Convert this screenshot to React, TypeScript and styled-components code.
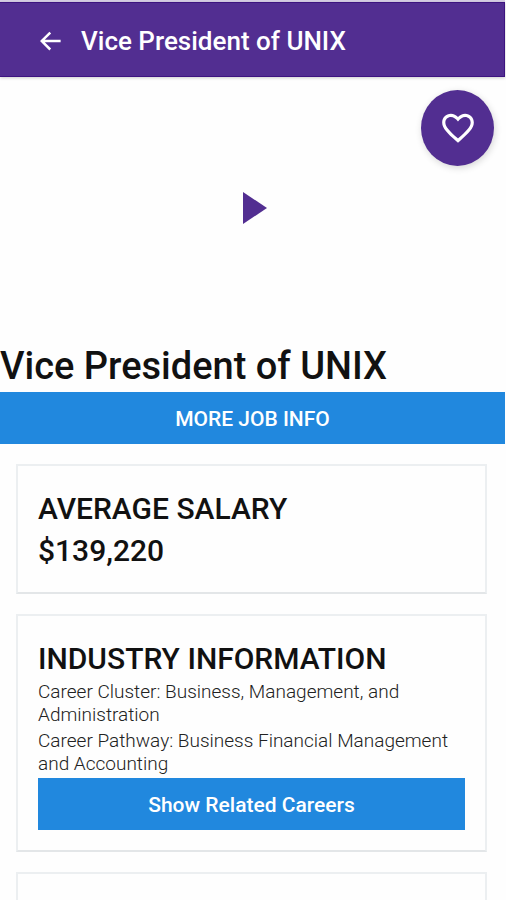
import React from "react";
import styled, { createGlobalStyle } from "styled-components";

const GlobalStyle = createGlobalStyle`
  * { box-sizing: border-box; }
  body {
    margin: 0;
    background: #fefefe;
    color: #111;
    font-family: Roboto, "Liberation Sans", sans-serif;
  }
  h1, h2, p { margin: 0; }
  button { border: 0; padding: 0; font-family: inherit; cursor: pointer; }
`;

const Screen = styled.div`
  height: 100vh;
  overflow: hidden;
  padding-right: 1px;
`;

const StatusStrip = styled.div`
  height: 2px;
  background: #d5cde4;
`;

const AppBar = styled.header`
  display: flex;
  align-items: center;
  gap: 16px;
  height: 75px;
  padding: 2px 36px 0 35px;
  background: #522e91;
  color: #fff;
  border: 1px solid #3d1480;
  border-left: 0;
  box-shadow: 0 1px 3px rgba(0, 0, 0, 0.2);
`;

const BackButton = styled.button`
  display: flex;
  background: transparent;
  color: inherit;
`;

const BarTitle = styled.span`
  font-size: 26px;
  font-weight: 500;
  line-height: 32px;
`;

const Media = styled.section`
  position: relative;
  display: flex;
  align-items: center;
  justify-content: center;
  height: 262px;
`;

const PlayButton = styled.button`
  display: flex;
  background: transparent;
`;

const FavoriteButton = styled.button`
  position: absolute;
  top: 13px;
  right: 11px;
  display: flex;
  align-items: center;
  justify-content: center;
  width: 73px;
  height: 76px;
  border-radius: 50%;
  background: #522e91;
  box-shadow: 1px 2px 7px rgba(0, 0, 0, 0.16);
`;

const JobTitle = styled.h1`
  padding-top: 1px;
  font-size: 38px;
  font-weight: 500;
  line-height: 52px;
`;

const ActionButton = styled.button`
  display: block;
  width: 100%;
  height: 52px;
  padding-top: 2px;
  background: #2188de;
  color: #fff;
  font-size: 21px;
  font-weight: 500;
`;

const Cards = styled.main`
  display: flex;
  flex-direction: column;
  gap: 20px;
  padding: 20px 18px 0 16px;
`;

const Card = styled.section`
  padding: 22px 20px 20px;
  border: 2px solid #eceff1;
  border-bottom-color: #e3e6e8;
  min-height: 130px;
`;

const CardTitle = styled.h2`
  font-size: 30px;
  font-weight: 500;
  line-height: 42px;
`;

const Salary = styled.p`
  font-size: 30px;
  font-weight: 500;
  line-height: 42px;
`;

const Detail = styled.p`
  margin-bottom: 3px;
  color: #222;
  font-size: 19px;
  font-weight: 300;
  line-height: 23px;
`;

export default function App() {
  return (
    <Screen>
      <GlobalStyle />
      <StatusStrip />
      <AppBar>
        <BackButton aria-label="Back">
          <svg width="30" height="30" viewBox="0 0 24 24" fill="currentColor">
            <path d="M20.5 11H7.83l5.09-5.09L11.5 4.5 4 12l7.5 7.5 1.41-1.41L7.83 13H20.5v-2z" />
          </svg>
        </BackButton>
        <BarTitle>Vice President of UNIX</BarTitle>
      </AppBar>
      <Media>
        <PlayButton aria-label="Play video">
          <svg width="30" height="32" viewBox="0 0 30 32">
            <path d="M5 0v32l24-16z" fill="#522e91" />
          </svg>
        </PlayButton>
        <FavoriteButton aria-label="Add to favorites">
          <svg width="38" height="38" viewBox="0 0 24 24" fill="#fff">
            <path d="M16.5 3c-1.74 0-3.41.81-4.5 2.09C10.91 3.81 9.24 3 7.5 3 4.42 3 2 5.42 2 8.5c0 3.78 3.4 6.86 8.55 11.54L12 21.35l1.45-1.32C18.6 15.36 22 12.28 22 8.5 22 5.42 19.58 3 16.5 3zm-4.4 15.55l-.1.1-.1-.1C7.14 14.24 4 11.39 4 8.5 4 6.5 5.5 5 7.5 5c1.54 0 3.04.99 4.5 2.9C13.46 5.99 14.96 5 16.5 5c2 0 3.5 1.5 3.5 3.5 0 2.89-3.14 5.74-7.9 10.05z" />
          </svg>
        </FavoriteButton>
      </Media>
      <JobTitle>Vice President of UNIX</JobTitle>
      <ActionButton>MORE JOB INFO</ActionButton>
      <Cards>
        <Card>
          <CardTitle>AVERAGE SALARY</CardTitle>
          <Salary>$139,220</Salary>
        </Card>
        <Card>
          <CardTitle>INDUSTRY INFORMATION</CardTitle>
          <Detail>Career Cluster: Business, Management, and Administration</Detail>
          <Detail>Career Pathway: Business Financial Management and Accounting</Detail>
          <ActionButton>Show Related Careers</ActionButton>
        </Card>
        <Card />
      </Cards>
    </Screen>
  );
}
